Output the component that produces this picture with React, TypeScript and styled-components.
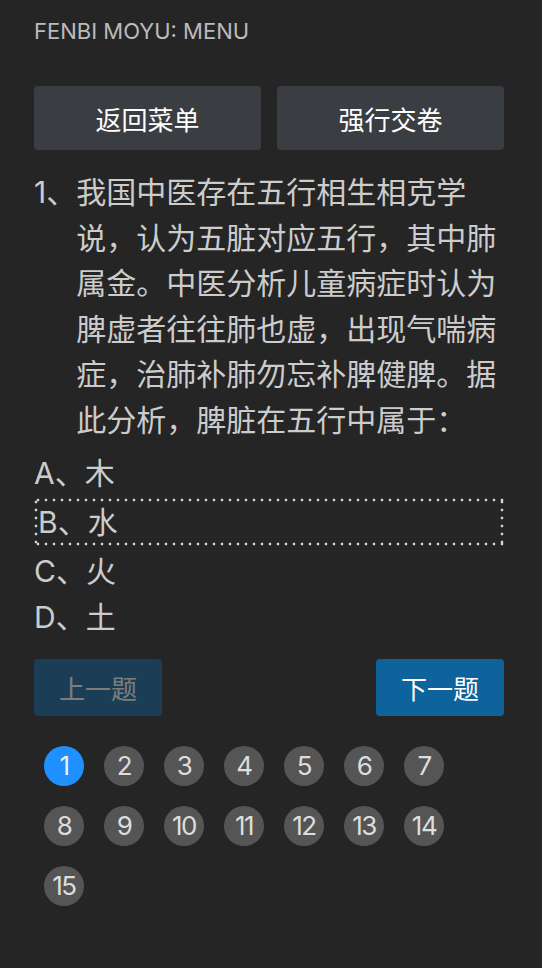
import React, { useState } from "react";
import styled, { createGlobalStyle, css } from "styled-components";

const GlobalStyle = createGlobalStyle`
  html, body {
    margin: 0;
    padding: 0;
    background: #252526;
  }
  body {
    font-family: "Inter", "Noto Sans CJK SC", sans-serif;
    color: #cccccc;
  }
  * { box-sizing: border-box; }
`;

const Page = styled.div`
  padding: 20px 38px 40px 34px;
  min-height: 968px;
`;

const Title = styled.div`
  font-size: 22px;
  line-height: 22px;
  color: #bbbbbb;
  text-transform: uppercase;
`;

const TopBar = styled.div`
  display: grid;
  grid-template-columns: 1fr 1fr;
  gap: 16px;
  margin-top: 44px;
`;

const SecondaryButton = styled.button`
  height: 64px;
  border: none;
  border-radius: 4px;
  background: #3a3d41;
  color: #ffffff;
  font-family: "Inter", "Noto Sans CJK SC", sans-serif;
  font-size: 26px;
  cursor: pointer;
`;

const Question = styled.div`
  display: flex;
  margin-top: 20px;
  font-size: 30px;
  line-height: 45.6px;
  color: #cccccc;
`;

const QNum = styled.span`
  flex: none;
`;

const QText = styled.span`
  flex: 1;
`;

const Options = styled.div`
  margin-top: 6px;
  display: flex;
  flex-direction: column;
`;

const dot = "radial-gradient(circle, #d6d6d6 1.1px, rgba(214,214,214,0) 1.7px)";

const focusRing = css`
  background:
    ${dot} 0 0 / 8px 4px repeat-x,
    ${dot} 0 100% / 8px 4px repeat-x,
    ${dot} 0 0 / 4px 8px repeat-y,
    ${dot} 100% 0 / 4px 8px repeat-y;
`;

const Option = styled.div<{ $focused?: boolean }>`
  font-size: 30px;
  line-height: ${(p) => (p.$focused ? "48px" : "46px")};
  color: #cccccc;
  cursor: pointer;
  padding-left: ${(p) => (p.$focused ? "4px" : "0")};
  margin: ${(p) => (p.$focused ? "2px 0" : "0")};
  ${(p) => p.$focused && focusRing}
`;

const NavBar = styled.div`
  display: flex;
  justify-content: space-between;
  margin-top: 19px;
`;

const PrimaryButton = styled.button<{ disabled?: boolean }>`
  height: 57px;
  padding: 0 25px;
  border: none;
  border-radius: 4px;
  background: #0e639c;
  color: #ffffff;
  font-family: "Inter", "Noto Sans CJK SC", sans-serif;
  font-size: 26px;
  opacity: ${(p) => (p.disabled ? 0.4 : 1)};
  cursor: ${(p) => (p.disabled ? "not-allowed" : "pointer")};
`;

const Dots = styled.div`
  display: flex;
  flex-wrap: wrap;
  margin-top: 20px;
`;

const Dot = styled.div<{ $active?: boolean }>`
  width: 40px;
  height: 40px;
  margin: 10px;
  border-radius: 50%;
  background: ${(p) => (p.$active ? "#1e90ff" : "#555555")};
  color: ${(p) => (p.$active ? "#eeeeee" : "#dddddd")};
  display: flex;
  align-items: center;
  justify-content: center;
  font-size: 26px;
  letter-spacing: -1.5px;
  cursor: pointer;
`;

const options = ["A、木", "B、水", "C、火", "D、土"];

export default function App() {
  const [current] = useState(1);
  return (
    <>
      <GlobalStyle />
      <Page>
        <Title>Fenbi Moyu: Menu</Title>
        <TopBar>
          <SecondaryButton>返回菜单</SecondaryButton>
          <SecondaryButton>强行交卷</SecondaryButton>
        </TopBar>
        <Question>
          <QNum>1、</QNum>
          <QText>
            我国中医存在五行相生相克学说，认为五脏对应五行，其中肺属金。中医分析儿童病症时认为脾虚者往往肺也虚，出现气喘病症，治肺补肺勿忘补脾健脾。据此分析，脾脏在五行中属于：
          </QText>
        </Question>
        <Options>
          {options.map((o, i) => (
            <Option key={o} $focused={i === 1}>
              {o}
            </Option>
          ))}
        </Options>
        <NavBar>
          <PrimaryButton disabled>上一题</PrimaryButton>
          <PrimaryButton>下一题</PrimaryButton>
        </NavBar>
        <Dots>
          {Array.from({ length: 15 }, (_, i) => i + 1).map((n) => (
            <Dot key={n} $active={n === current}>
              {n}
            </Dot>
          ))}
        </Dots>
      </Page>
    </>
  );
}
